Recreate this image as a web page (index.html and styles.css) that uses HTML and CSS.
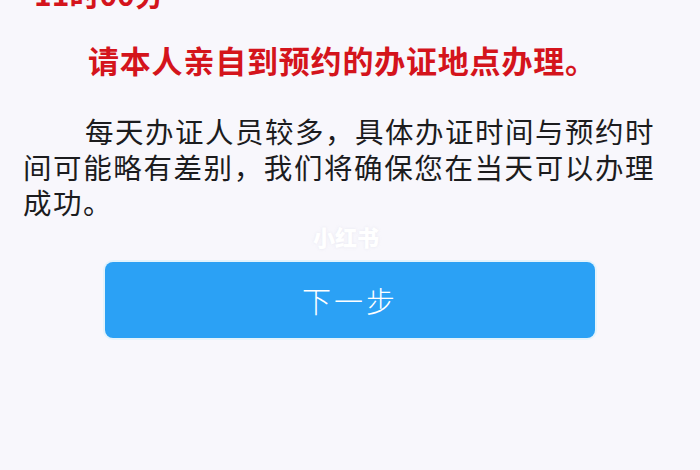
FILE: index.html
```html
<!DOCTYPE html>
<html lang="zh-CN">
<head>
    <meta charset="UTF-8">
    <title>预约办证</title>
    <link rel="stylesheet" href="styles.css">
</head>
<body>
    <div class="page">
        <p class="time">11时00分</p>
        <p class="notice">请本人亲自到预约的办证地点办理。</p>
        <p class="desc">每天办证人员较多，具体办证时间与预约时间可能略有差别，我们将确保您在当天可以办理成功。</p>

        <div class="actions">
            <button type="button" class="next-btn">下一步</button>
        </div>

        <span class="watermark">小红书</span>
    </div>
</body>
</html>
```

FILE: styles.css
```css
body {
    margin: 0;
    padding: 0;
    background: #f8f7fc;
    font-family: "Noto Sans CJK SC", "Noto Sans", sans-serif;
    color: #1c1c1e;
}

.page {
    position: relative;
    width: 634px;
    height: 470px;
    padding-left: 23px;
    overflow: hidden;
}

p {
    margin: 0;
}

.time {
    margin-top: -25px;
    padding-left: 11px;
    font-size: 30px;
    line-height: 36px;
    font-weight: bold;
    color: #d4141c;
}

.notice {
    margin-top: 31px;
    text-indent: 65px;
    font-size: 31px;
    line-height: 36px;
    letter-spacing: 0.8px;
    font-weight: bold;
    color: #d4141c;
}

.desc {
    margin-top: 35px;
    width: 632px;
    text-indent: 62px;
    font-size: 28.5px;
    line-height: 35.5px;
    letter-spacing: 1.5px;
    text-align: justify;
}

.actions {
    display: flex;
    margin-top: 42px;
    padding-left: 82px;
}

.next-btn {
    width: 490px;
    height: 76px;
    border: none;
    border-radius: 8px;
    background-color: #2ba1f5;
    box-shadow: 0 0 0 2px #e4f3fc;
    color: white;
    font-family: inherit;
    font-size: 29px;
    letter-spacing: 3px;
    font-weight: 300;
    cursor: pointer;
}

.watermark {
    position: absolute;
    left: 313px;
    top: 220px;
    font-size: 22px;
    font-weight: 900;
    color: #ffffff;
    text-shadow: 0 0 3px rgba(225, 225, 238, 0.7);
}
```
